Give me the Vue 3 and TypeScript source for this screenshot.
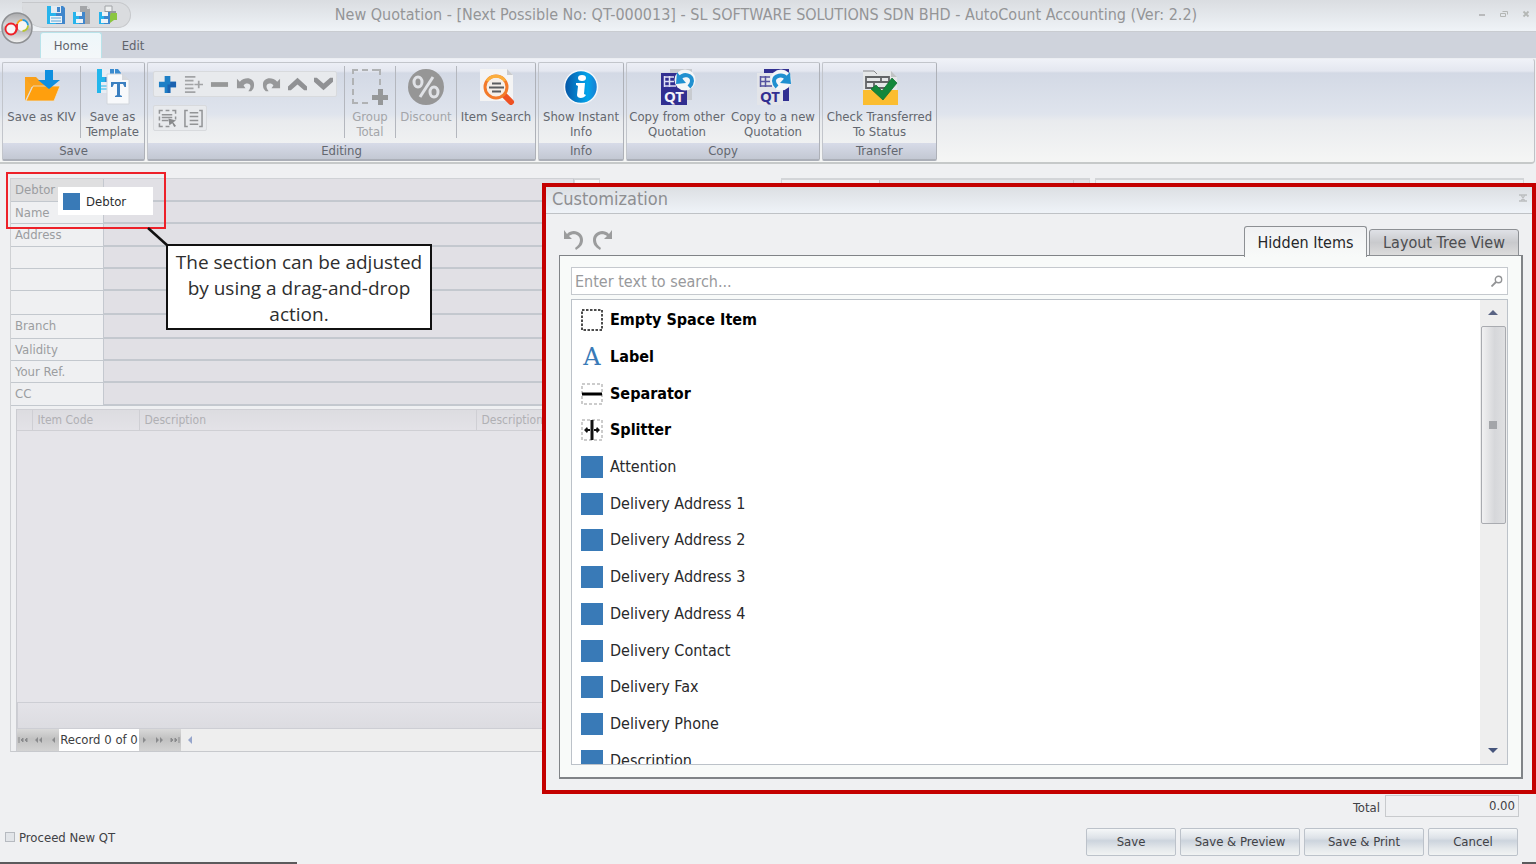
<script setup lang="ts">
import { ref } from 'vue'

interface FieldRow {
  id: string
  label: string
  size: 'short' | 'mid' | 'tall'
}

interface LayoutItem {
  name: string
  kind: 'space' | 'label' | 'separator' | 'splitter' | 'field'
}

const rows: FieldRow[] = [
  { id: 'debtor', label: 'Debtor', size: 'mid' },
  { id: 'name', label: 'Name', size: 'short' },
  { id: 'address1', label: 'Address', size: 'mid' },
  { id: 'address2', label: '', size: 'short' },
  { id: 'address3', label: '', size: 'short' },
  { id: 'address4', label: '', size: 'tall' },
  { id: 'branch', label: 'Branch', size: 'tall' },
  { id: 'validity', label: 'Validity', size: 'short' },
  { id: 'reference', label: 'Your Ref.', size: 'short' },
  { id: 'cc', label: 'CC', size: 'mid' },
]

const items: LayoutItem[] = [
  { name: 'Empty Space Item', kind: 'space' },
  { name: 'Label', kind: 'label' },
  { name: 'Separator', kind: 'separator' },
  { name: 'Splitter', kind: 'splitter' },
  { name: 'Attention', kind: 'field' },
  { name: 'Delivery Address 1', kind: 'field' },
  { name: 'Delivery Address 2', kind: 'field' },
  { name: 'Delivery Address 3', kind: 'field' },
  { name: 'Delivery Address 4', kind: 'field' },
  { name: 'Delivery Contact', kind: 'field' },
  { name: 'Delivery Fax', kind: 'field' },
  { name: 'Delivery Phone', kind: 'field' },
  { name: 'Description', kind: 'field' },
]

const search = ref('')
const total = ref('0.00')
const proceed = ref(false)
</script>

<template>
  <div class="window">
    <header class="titlebar">
      <div class="quick">
        <button type="button" aria-label="Save">
          <svg width="20" height="20" viewBox="0 0 20 20">
            <path d="M1 1h16l2 2v16H1z" fill="#3f86cc" />
            <path d="M1 1h9v18H1z" fill="#27b4ec" />
            <path d="M5 1h10v7H5z" fill="#e3ebf2" />
            <path d="M11 2h3v5h-3z" fill="#3f86cc" />
            <path d="M4 11h12v7H4z" fill="#eef3f7" />
            <path d="M5 13h10M5 16h10" stroke="#59a7da" />
          </svg>
        </button>
        <button type="button" aria-label="Save and new">
          <svg width="20" height="20" viewBox="0 0 20 20">
            <path d="M8 1h7l3 3v15H8z" fill="#a4a6a9" />
            <path d="M15 1v3h3" fill="#d8dadc" />
            <path d="M1 7h12v12H1z" fill="#3f86cc" />
            <path d="M1 7h6v12H1z" fill="#27b4ec" />
            <path d="M4 7h6v4H4zM4 14h7v4H4z" fill="#eef3f7" />
          </svg>
        </button>
        <button type="button" aria-label="Save and print">
          <svg width="20" height="20" viewBox="0 0 20 20">
            <path d="M7 1h7v6H7z" fill="#eef0f1" stroke="#a0a3a6" />
            <path d="M7 6h11v8H7z" fill="#96999c" />
            <path d="M13 8h6v7h-3l-4 3v-7z" fill="#8bc63f" />
            <path d="M1 7h11v12H1z" fill="#3f86cc" />
            <path d="M1 7h5v12H1z" fill="#27b4ec" />
            <path d="M4 7h6v4H4zM3 14h7v4H3z" fill="#eef3f7" />
          </svg>
        </button>
      </div>
      <button type="button" class="orb" aria-label="Application menu">
        <svg width="32" height="32" viewBox="0 0 32 32">
          <defs>
            <linearGradient id="orb-metal" x1="0" y1="0" x2="0" y2="1">
              <stop offset="0" stop-color="#a9aaac" />
              <stop offset=".4" stop-color="#d8d8da" />
              <stop offset=".55" stop-color="#b3b3b6" />
              <stop offset="1" stop-color="#f4f4f4" />
            </linearGradient>
          </defs>
          <circle cx="16" cy="16" r="15" fill="url(#orb-metal)" stroke="#8e9093" stroke-width="1.500" />
          <circle cx="10" cy="17" r="5.500" fill="#f6f6f6" stroke="#ee2027" stroke-width="1.800" />
          <circle cx="21.500" cy="13.500" r="5.500" fill="#f6f6f6" />
          <g fill="none" stroke-width="1.800">
            <path d="M16 13.500a5.500 5.500 0 0 1 5.500-5.500" stroke="#f7a51c" />
            <path d="M21.500 8a5.500 5.500 0 0 1 5.500 5.500" stroke="#249bdc" />
            <path d="M27 13.500a5.500 5.500 0 0 1-5.500 5.500" stroke="#b7c62e" />
            <path d="M16 12v5l-2 4" stroke="#ee2027" />
          </g>
        </svg>
      </button>
      <h1>New Quotation - [Next Possible No: QT-000013] - SL SOFTWARE SOLUTIONS SDN BHD - AutoCount Accounting (Ver: 2.2)</h1>
      <div class="winbtns">
        <button type="button" aria-label="Minimize"><svg width="8" height="8" viewBox="0 0 8 8"><path d="M1 5h6" stroke="#b9babc" stroke-width="2" /></svg></button>
        <button type="button" aria-label="Restore"><svg width="8" height="8" viewBox="0 0 8 8"><path d="M2.500 1.500h5v3M.5 3.500h5v3h-5z" fill="none" stroke="#b4b7b5" /></svg></button>
        <button type="button" aria-label="Close"><svg width="8" height="8" viewBox="0 0 8 8"><path d="M1.500 1.500l5 5M6.500 1.500l-5 5" stroke="#b4b7b5" stroke-width="1.800" /></svg></button>
      </div>
    </header>

    <nav class="tabs">
      <button type="button" class="tab on">Home</button>
      <button type="button" class="tab">Edit</button>
    </nav>

    <div class="ribbon">
      <section class="group g-save">
        <div class="body">
          <button type="button" class="big kiv">
            <svg width="38" height="36" viewBox="0 0 38 36">
              <path d="M2 8h11l3 3h13v7H2z" fill="#f9a01b" />
              <path d="M2 9v23l7-15z" fill="#fba51f" />
              <path d="M10 17h27l-6 15H3z" fill="#ff9f0d" stroke="#e8e3d8" stroke-width=".8" />
              <path d="M22 1h8v10h7L26 20 15 11h7z" fill="#0f8fdf" />
            </svg>
            Save as KIV
          </button>
          <i class="rule"></i>
          <button type="button" class="big grow">
            <svg width="38" height="36" viewBox="0 0 38 36">
              <path d="M3 0h21l3 4v20H3z" fill="#3a8bd0" />
              <path d="M3 0h8v24H3z" fill="#22b6ec" />
              <path d="M8 0h13v8H8zM7 13h8v11H7z" fill="#e7edf4" />
              <path d="M16 0h4v6h-4z" fill="#3a8bd0" />
              <path d="M7 17h6M7 20h6" stroke="#22b6ec" />
              <path d="M13 5h15l7 6v24H13z" fill="#f8f9fb" stroke="#d2d6dc" />
              <path d="M28 5v6h7z" fill="#d5d8dd" />
              <path d="M17 13h15v5h-1.500l-1.500-3h-3v11l2 1v1h-7v-1l2-1V15h-3l-1.500 3H17z" fill="#3b7fc0" />
            </svg>
            Save as<br />Template
          </button>
        </div>
        <h2>Save</h2>
      </section>

      <section class="group g-edit">
        <div class="body">
          <div class="strips">
            <div class="strip">
              <button type="button" aria-label="Add"><svg viewBox="0 0 20 20"><path d="M7 1h6v6h6v6h-6v6H7v-6H1V7h6z" fill="#1d7fc6" /><path d="M13 7h6v6h-6v6h-3V10h3z" fill="#1b62b0" /></svg></button>
              <button type="button" aria-label="Insert"><svg viewBox="0 0 20 20"><path d="M1 2h11M1 6h9M1 10h9M1 14h9M1 18h11M11 10h9M15.500 6v8" stroke="#a2a4a6" stroke-width="1.800" /></svg></button>
              <button type="button" aria-label="Delete"><svg viewBox="0 0 20 20"><path d="M1 7.500h18v5H1z" fill="#979899" /></svg></button>
              <button type="button" aria-label="Undo"><svg viewBox="0 0 20 20"><path d="M1 4l3 3c6-6 15-4 15 3 0 4-1 5-3 7h-3c4-5 2-8-1-8-2 0-3 .5-4 2l2 3H1z" fill="#97989a" /></svg></button>
              <button type="button" aria-label="Redo"><svg viewBox="0 0 20 20"><path d="M19 4l-3 3C10 1 1 3 1 10c0 4 1 5 3 7h3C3 12 5 9 8 9c2 0 3 .5 4 2l-2 3h9z" fill="#97989a" /></svg></button>
              <button type="button" aria-label="Move up"><svg viewBox="0 0 20 20"><path d="M0 12l10-9 10 9v4h-3l-7-6-7 6H0z" fill="#909194" /></svg></button>
              <button type="button" aria-label="Move down"><svg viewBox="0 0 20 20"><path d="M0 7l10 9 10-9V3h-3l-7 6-7-6H0z" fill="#909194" /></svg></button>
            </div>
            <div class="strip">
              <button type="button" aria-label="Select all"><svg viewBox="0 0 20 20"><path d="M1.500 5V1.500H5M8 1.500h4M15 1.500h3.500V5M1.500 8v4M1.500 15v3.500H5M8 18.500h4M18.500 8v3" fill="none" stroke="#929496" stroke-width="1.600" /><path d="M4 6h11M4 9h11M4 12h7" stroke="#929496" stroke-width="1.600" /><path d="M11 10l8 2-3 2 3 4-2 1-2-4-3 2z" fill="#87898b" /></svg></button>
              <button type="button" aria-label="Range"><svg viewBox="0 0 20 20"><path d="M4 1.500H1v17h3M16 1.500h3v17h-3M6 4h9M6 8h9M6 12h9M6 16h9" fill="none" stroke="#929496" stroke-width="1.600" /></svg></button>
            </div>
          </div>
          <i class="rule"></i>
          <button type="button" class="big total off">
            <svg width="38" height="36" viewBox="0 0 38 36">
              <path d="M2 5V1h5M11 1h6M21 1h8v5M29 10v6M2 9v7M2 20v6M2 30v4h5M11 34h6" fill="none" stroke="#b0b2b4" stroke-width="2" />
              <path d="M27 20h5v6h5v5h-5v5h-5v-5h-6v-5h6z" fill="#969899" />
            </svg>
            Group<br />Total
          </button>
          <i class="rule"></i>
          <button type="button" class="big disc off">
            <svg width="38" height="36" viewBox="0 0 38 36">
              <circle cx="19" cy="18" r="18" fill="#969696" />
              <ellipse cx="11" cy="13" rx="4" ry="5" fill="none" stroke="#e0e2e6" stroke-width="3" />
              <ellipse cx="27" cy="23" rx="4" ry="5" fill="none" stroke="#e0e2e6" stroke-width="3" />
              <path d="M26 8L13 28" stroke="#e0e2e6" stroke-width="3" />
            </svg>
            Discount
          </button>
          <i class="rule"></i>
          <button type="button" class="big grow">
            <svg width="38" height="36" viewBox="0 0 38 36">
              <path d="M3 0h27l6 6v26H3z" fill="#f4f4f4" />
              <path d="M30 0v6h6z" fill="#c9cbce" />
              <path d="M27 26l7 7" stroke="#ee5123" stroke-width="6" stroke-linecap="round" />
              <circle cx="19" cy="18" r="11" fill="#f5efe9" stroke="#f37a2a" stroke-width="3" />
              <path d="M10 12a11 11 0 0 1 18 0" fill="none" stroke="#fbae3c" stroke-width="3" />
              <path d="M15 14.500h9M12 18.500h15M15 22.500h9" stroke="#5b5d60" stroke-width="1.800" />
            </svg>
            Item Search
          </button>
        </div>
        <h2>Editing</h2>
      </section>

      <section class="group g-info">
        <div class="body">
          <button type="button" class="big grow">
            <svg width="38" height="36" viewBox="0 0 38 36">
              <defs>
                <linearGradient id="info-blue">
                  <stop offset="0" stop-color="#0655a6" />
                  <stop offset=".7" stop-color="#03a4ea" />
                  <stop offset="1" stop-color="#1c7bd0" />
                </linearGradient>
              </defs>
              <circle cx="19" cy="18" r="16.500" fill="url(#info-blue)" stroke="#f4f7fa" stroke-width="1.500" />
              <ellipse cx="20" cy="9" rx="4" ry="3" fill="#fff" />
              <path d="M14 14h9l-1 11 2 1c-2 4-9 4-9 0l1-9-2-1z" fill="#fff" />
            </svg>
            Show Instant<br />Info
          </button>
        </div>
        <h2>Info</h2>
      </section>

      <section class="group g-copy">
        <div class="body">
          <button type="button" class="big from">
            <svg width="38" height="36" viewBox="0 0 38 36">
              <path d="M12 0h22v31H12z" fill="#c8cbd0" />
              <path d="M3 4h26v32H3z" fill="#312f91" />
              <path d="M6 8h10M6 12.500h10M6 17h12M6.500 7v11M11.500 7v11" stroke="#dfe0f4" stroke-width="1.500" />
              <circle cx="27" cy="11" r="10.500" fill="#f4f6f8" />
              <path d="M18 15l1-12 9 11z" fill="#2090d0" />
              <path d="M22 9c4-5 12-3 12 3 0 2-1 4-3 6" fill="none" stroke="#2090d0" stroke-width="4" />
              <text x="16" y="33" class="qt light">QT</text>
            </svg>
            Copy from other<br />Quotation
          </button>
          <button type="button" class="big grow">
            <svg width="38" height="36" viewBox="0 0 38 36">
              <path d="M10 0h25v32H10z" fill="#312f91" />
              <path d="M3 4h26v32H3z" fill="#e3e5e9" />
              <path d="M6 8h10M6 12.500h10M6 17h12M6.500 7v11M11.500 7v11" stroke="#55539f" stroke-width="1.500" />
              <circle cx="27" cy="11" r="10.500" fill="#f4f6f8" />
              <path d="M37 15L36 3 26 14z" fill="#2090d0" />
              <path d="M32 9c-3-4-12-3-12 3 0 2 1 4 3 6" fill="none" stroke="#2090d0" stroke-width="4" />
              <text x="16" y="33" class="qt dark">QT</text>
            </svg>
            Copy to a new<br />Quotation
          </button>
        </div>
        <h2>Copy</h2>
      </section>

      <section class="group g-transfer">
        <div class="body">
          <button type="button" class="big grow">
            <svg width="38" height="36" viewBox="0 0 38 36">
              <path d="M2 2h28l6 6v18H2z" fill="#e5e7e8" />
              <path d="M2 2h11l3 3" fill="none" stroke="#88898b" />
              <path d="M30 2v6h6z" fill="#c0c2c4" />
              <path d="M2 21h35v15H2z" fill="#fbbd30" />
              <path d="M5 8h23v11H5zM5 13h23M13 13v6M20 8v5" fill="none" stroke="#626466" stroke-width="1.800" />
              <path d="M10 20l5-4 6 6L31 9l5 5-14 17z" fill="#13873b" stroke="#0b6a2c" stroke-width=".7" />
            </svg>
            Check Transferred<br />To Status
          </button>
        </div>
        <h2>Transfer</h2>
      </section>
    </div>

    <main class="document">
      <div class="sheet">
        <div class="heads">
          <form class="entry" @submit.prevent>
            <div v-for="row in rows" :key="row.id" class="row" :class="[row.size, row.id]">
              <label :for="row.id">{{ row.label }}</label>
              <input :id="row.id" type="text" :aria-label="row.label || 'Address line'" />
            </div>
          </form>
          <div class="side lookup"></div>
          <div class="side numbers"><span></span><span class="fill"></span><span class="fill"></span></div>
          <div class="side notes"></div>
        </div>
        <div class="lines">
          <table>
            <thead>
              <tr>
                <th class="c-mark"></th>
                <th class="c-code">Item Code</th>
                <th class="c-desc">Description</th>
                <th>Description</th>
              </tr>
            </thead>
          </table>
          <div class="blank"></div>
          <div class="sums"></div>
          <div class="navigator">
            <div class="navs">
              <button type="button" aria-label="First"><svg width="10" height="8" viewBox="0 0 10 8"><path d="M1 1v6M5 2L3 4l2 2zM9 2L7 4l2 2z" fill="#8a8b8d" stroke="#8a8b8d" /></svg></button>
              <button type="button" aria-label="Previous page"><svg width="10" height="8" viewBox="0 0 10 8"><path d="M5 1L2 4l3 3zM9 1L6 4l3 3z" fill="#8a8b8d" /></svg></button>
              <button type="button" aria-label="Previous"><svg width="10" height="8" viewBox="0 0 10 8"><path d="M7 1L4 4l3 3z" fill="#8a8b8d" /></svg></button>
            </div>
            <output>Record 0 of 0</output>
            <div class="navs">
              <button type="button" aria-label="Next"><svg width="10" height="8" viewBox="0 0 10 8"><path d="M3 1l3 3-3 3z" fill="#8a8b8d" /></svg></button>
              <button type="button" aria-label="Next page"><svg width="10" height="8" viewBox="0 0 10 8"><path d="M1 1l3 3-3 3zM5 1l3 3-3 3z" fill="#8a8b8d" /></svg></button>
              <button type="button" aria-label="Last"><svg width="10" height="8" viewBox="0 0 10 8"><path d="M1 2l2 2-2 2zM5 2l2 2-2 2zM9 1v6" fill="#8a8b8d" stroke="#8a8b8d" /></svg></button>
            </div>
            <button type="button" class="scroll-left" aria-label="Scroll left"><svg width="6" height="8" viewBox="0 0 6 8"><path d="M5 0L1 4l4 4z" fill="#96a5cb" /></svg></button>
          </div>
        </div>
      </div>
    </main>

    <footer>
      <div class="total-row">
        <label for="total">Total</label>
        <input id="total" v-model="total" type="text" />
      </div>
      <div class="actions">
        <label class="proceed"><input v-model="proceed" type="checkbox" />Proceed New QT</label>
        <button type="button">Save</button>
        <button type="button" class="wide">Save &amp; Preview</button>
        <button type="button" class="wide">Save &amp; Print</button>
        <button type="button">Cancel</button>
      </div>
      <div class="edge"><i></i><i></i></div>
    </footer>

    <div class="focus-frame"></div>
    <div class="drag-chip"><i></i>Debtor</div>
    <svg class="pointer" width="24" height="22" viewBox="0 0 24 22"><path d="M2 2l20 18" stroke="#111" stroke-width="2.500" /></svg>
    <p class="callout">The section can be adjusted by using a drag-and-drop action.</p>

    <section class="dialog" aria-label="Customization">
      <header>
        <h2>Customization</h2>
        <button type="button" aria-label="Close"><svg width="8" height="8" viewBox="0 0 8 8"><path d="M0 1h8M0 7h8M2 1l4 6M6 1L2 7" stroke="#bcbec0" stroke-width="1.300" /></svg></button>
      </header>
      <div class="dialog-tools">
        <div class="history">
          <button type="button" aria-label="Undo"><svg width="20" height="20" viewBox="0 0 20 20"><path d="M1 0v9h8L6 6c5-4 11-1 11 4 0 3-2 6-5 8l1 2c5-3 7-6 7-10C20 2 10-2 4 4z" fill="#9b9c9d" /></svg></button>
          <button type="button" aria-label="Redo"><svg width="20" height="20" viewBox="0 0 20 20"><path d="M19 0v9h-8l3-3C9 2 3 5 3 10c0 3 2 6 5 8l-1 2C2 17 0 14 0 10 0 2 10-2 16 4z" fill="#9b9c9d" /></svg></button>
        </div>
        <div class="dialog-tabs" role="tablist">
          <button type="button" role="tab" class="on">Hidden Items</button>
          <button type="button" role="tab">Layout Tree View</button>
        </div>
      </div>
      <div class="pane">
        <div class="search">
          <input v-model="search" type="text" placeholder="Enter text to search..." aria-label="Search" />
          <svg width="12" height="12" viewBox="0 0 12 12"><circle cx="7.500" cy="4.500" r="3.200" fill="none" stroke="#929395" stroke-width="1.400" /><path d="M5 7l-4.500 4.500" stroke="#929395" stroke-width="1.800" /></svg>
        </div>
        <div class="list">
          <ul>
            <li v-for="item in items" :key="item.name" :class="{ builtin: item.kind !== 'field' }">
              <svg width="22" height="22" viewBox="0 0 22 22">
                <rect v-if="item.kind === 'space'" x="1" y="1" width="20" height="20" fill="none" stroke="#111" stroke-width="1.500" stroke-dasharray="2.500 1.500" />
                <text v-else-if="item.kind === 'label'" x="11" y="19" class="glyph">A</text>
                <template v-else-if="item.kind === 'separator'">
                  <rect x="1" y="1" width="20" height="20" fill="none" stroke="#999" stroke-dasharray="3 2" />
                  <path d="M1 11h20" stroke="#000" stroke-width="3" />
                </template>
                <template v-else-if="item.kind === 'splitter'">
                  <rect x="1" y="1" width="20" height="20" fill="none" stroke="#999" stroke-dasharray="3 2" />
                  <path d="M11 1v20" stroke="#111" stroke-width="3" />
                  <path d="M3 11l3-3 1 2h2v2H7l-1 2zM19 11l-3-3-1 2h-2v2h2l1 2z" fill="#111" />
                </template>
                <rect v-else width="22" height="22" fill="#397ab7" />
              </svg>
              {{ item.name }}
            </li>
          </ul>
          <div class="scrollbar">
            <svg width="10" height="6" viewBox="0 0 10 6"><path d="M0 6l5-5 5 5z" fill="#5a6484" /></svg>
            <div class="thumb"><i></i></div>
            <svg class="down" width="10" height="6" viewBox="0 0 10 6"><path d="M0 0l5 5 5-5z" fill="#46557c" /></svg>
          </div>
        </div>
      </div>
    </section>
  </div>
</template>

<style>
body {
  background: #eff0f2;
}
</style>

<style scoped>
.window {
  position: relative;
  display: flex;
  flex-direction: column;
  min-height: 100vh;
  overflow: hidden;
  background: #eff0f2;
  color: #3f4145;
  font: 13px/15px 'DejaVu Sans Condensed', 'DejaVu Sans', 'Noto Sans', sans-serif;
}
.window * {
  box-sizing: border-box;
}
button,
input {
  margin: 0;
  padding: 0;
  border: 0;
  background: none;
  color: inherit;
  font: inherit;
}
h1,
h2,
p,
ul {
  margin: 0;
  padding: 0;
  font-weight: normal;
}
svg {
  display: block;
}

.titlebar {
  position: relative;
  display: flex;
  align-items: center;
  height: 32px;
  border-bottom: 1px solid #c9ccd1;
  background: linear-gradient(#dadde1, #eff3f7);
}
.titlebar h1 {
  flex: 1;
  padding-bottom: 2px;
  color: #949597;
  font-size: 16px;
  line-height: 28px;
  text-align: center;
  white-space: nowrap;
}
.quick {
  display: flex;
  align-items: center;
  gap: 6px;
  width: 109px;
  height: 26px;
  margin: 0 0 2px 22px;
  padding-left: 24px;
  border: 1px solid #c6c8cb;
  border-left: 0;
  border-radius: 0 13px 13px 22px;
  background: #dadcdf;
}
.orb {
  position: absolute;
  left: 1px;
  top: 12px;
  z-index: 2;
}
.winbtns {
  display: flex;
  justify-content: flex-end;
  gap: 14px;
  width: 135px;
  padding: 0 6px 4px 0;
}

.tabs {
  display: flex;
  height: 26px;
  padding-left: 40px;
  background: #cfd3dc;
  color: #5f636b;
}
.tab {
  width: 62px;
}
.tab.on {
  border: 1px solid #b9e3ea;
  border-bottom: 0;
  border-radius: 3px 3px 0 0;
  background: linear-gradient(#eef7fa, #f4f7f9);
}

.ribbon {
  display: flex;
  gap: 2px;
  height: 106px;
  margin-right: 1px;
  padding: 3px 2px;
  border-top: 1px solid #eceef2;
  border-right: 1px solid #bfc2c6;
  border-bottom: 2px solid #c6c9c9;
  border-radius: 0 4px 4px 0;
  background: linear-gradient(#f0f2f8 0, #e4e7f0 12px, #d3d9e5 14px, #dfe4ed 55px, #e9ebee 62px, #f5f6f5 100%);
}
.group {
  display: flex;
  flex: none;
  flex-direction: column;
  height: 99px;
  border: 1px solid #c2c5cb;
  border-right-color: #aeb1b8;
  border-bottom: 2px solid #abafb8;
  border-radius: 2px;
  color: #63676f;
}
.group h2 {
  height: 16px;
  background: linear-gradient(#d7dbe8, #c3c8d3);
  font-size: 13px;
  text-align: center;
}
.group .body {
  display: flex;
  flex: 1;
}
.g-save { width: 143px; }
.g-edit { width: 389px; }
.g-info { width: 86px; }
.g-copy { width: 194px; }
.g-transfer { width: 115px; }
.rule {
  flex: none;
  width: 1px;
  height: 72px;
  margin-top: 3px;
  background: #b4b7be;
}
.big {
  align-self: flex-start;
  padding-top: 6px;
  text-align: center;
  white-space: nowrap;
}
.big svg {
  margin: 0 auto 4px;
}
.grow { flex: 1; }
.kiv { width: 77px; }
.total { width: 50px; }
.disc { width: 60px; }
.from { width: 100px; }
.off { color: #a3a5a9; }
.qt {
  font: bold 15px 'Noto Sans', sans-serif;
  text-anchor: middle;
}
.light { fill: #f3f3fa; }
.dark { fill: #312f91; }
.strips {
  display: flex;
  flex-direction: column;
  align-items: flex-start;
  gap: 8px;
  width: 196px;
  padding: 8px 0 0 5px;
}
.strip {
  display: flex;
  border: 1px solid #d8dadd;
  border-radius: 2px;
  background: #e8eaed;
}
.strip button {
  display: grid;
  place-items: center;
  width: 26px;
  height: 24px;
}
.strip svg {
  width: 19px;
  height: 19px;
}

.document {
  display: flex;
  flex: 1;
  padding: 14px 12px 0 10px;
}
.sheet {
  display: flex;
  flex: 1;
  flex-direction: column;
  border-bottom: 1px solid #c7c9cd;
  border-left: 1px solid #cfd1d4;
}
.heads {
  display: grid;
  grid-template-columns: 563px 26px 181px 309px 5px 1fr;
}
.heads > * {
  grid-row: 1;
}
.entry {
  grid-column: 1;
  border-top: 1px solid #cfd1d5;
}
.row {
  display: flex;
  border-bottom: 1px solid #c3c8ce;
}
.short { height: 22px; }
.mid { height: 23px; }
.tall { height: 24px; }
.row label {
  width: 92px;
  padding: 3px 4px;
  color: #9b9da0;
}
.row.debtor label {
  background: #dfdfe0;
}
.row input {
  flex: 1;
  min-width: 0;
  border: solid #c4c8cf;
  border-width: 0 1px 1px;
  background: #e1e0e5;
}
.side {
  height: 24px;
  border: 1px solid #d3d5d8;
  border-width: 2px 1px 0;
}
.lookup {
  grid-column: 2;
  background: #f5f5f6;
}
.numbers {
  display: grid;
  grid-column: 4;
  grid-template-columns: 97px 1fr 16px;
}
.notes {
  grid-column: 6;
}
.fill {
  border-left: 1px solid #c5c8cd;
  background: #e1e0e5;
}
.lines {
  display: flex;
  flex: 1;
  flex-direction: column;
  margin: 3px 0 0 5px;
  border-left: 1px solid #cbccd1;
}
table {
  width: 100%;
  height: 22px;
  border-collapse: collapse;
  table-layout: fixed;
  background: linear-gradient(#dcdce0, #e3e2e7);
  color: #b0b0b4;
  font-size: 12px;
}
th {
  padding: 0 5px;
  border: 1px solid #cfcfd4;
  border-left: 0;
  font-weight: normal;
  text-align: left;
}
.c-mark { width: 15px; padding: 0; }
.c-code { width: 107px; }
.c-desc { width: 337px; }
.blank {
  flex: 1;
  background: #e5e4e9;
}
.sums {
  height: 27px;
  border: 1px solid #cdced4;
  background: linear-gradient(#e4e3e8, #dcdce1);
}
.navigator {
  display: flex;
  height: 22px;
  background: #eeeeee;
}
.navs {
  display: flex;
  align-items: center;
  justify-content: space-between;
  width: 42px;
  padding: 0 1px;
  background: linear-gradient(#d9d9d9, #c1c1c1 45%, #d3d3d3);
}
.navigator output {
  width: 80px;
  background: #fff;
  color: #3d3d3f;
  line-height: 22px;
  text-align: center;
  white-space: nowrap;
}
.scroll-left {
  width: 20px;
  padding-left: 6px;
}

footer {
  display: flex;
  flex-direction: column;
  height: 112px;
  padding-top: 43px;
}
.total-row {
  display: flex;
  justify-content: flex-end;
  gap: 5px;
  padding-right: 17px;
}
.total-row label {
  padding-top: 5px;
}
.total-row input {
  width: 134px;
  height: 22px;
  padding: 0 3px 2px 0;
  border: 1px solid #c8cacd;
  text-align: right;
}
.actions {
  display: flex;
  gap: 4px;
  padding: 11px 18px 0 5px;
}
.actions button {
  width: 90px;
  height: 28px;
  padding-bottom: 2px;
  border: 1px solid #bcc2ca;
  border-radius: 2px;
  background: linear-gradient(#f5f7f8, #dde2e8 35%, #ccd4dd 45%, #e4e8eb 75%, #f1f3f3);
}
.actions .wide {
  width: 120px;
}
.proceed {
  display: flex;
  align-items: center;
  gap: 4px;
  margin-right: auto;
  padding-bottom: 10px;
}
.proceed input {
  width: 10px;
  height: 10px;
  border: 1px solid #b6bac0;
  background: #e2e5e9;
  appearance: none;
}
.proceed input:checked {
  background: #397ab7;
}
.edge {
  display: flex;
  justify-content: space-between;
  margin-top: auto;
}
.edge i {
  width: 297px;
  height: 2px;
  background: #5b5a5c;
}
.edge i + i {
  width: 14px;
}

.focus-frame {
  position: absolute;
  left: 6px;
  top: 172px;
  width: 160px;
  height: 57px;
  border: 2px solid #ed2129;
}
.drag-chip {
  position: absolute;
  left: 58px;
  top: 187px;
  display: flex;
  align-items: center;
  gap: 6px;
  width: 95px;
  height: 28px;
  padding-left: 5px;
  background: #fff;
  color: #2c2d2f;
}
.drag-chip i {
  width: 17px;
  height: 17px;
  background: #397ab7;
}
.pointer {
  position: absolute;
  left: 146px;
  top: 226px;
}
.callout {
  position: absolute;
  left: 166px;
  top: 244px;
  width: 266px;
  height: 86px;
  padding: 3px 2px;
  border: 2px solid #111;
  background: #fff;
  color: #2e2e2e;
  font: 19px/26px 'Open Sans', 'Noto Sans', sans-serif;
  text-align: center;
}

.dialog {
  position: absolute;
  left: 542px;
  right: 0;
  top: 183px;
  display: flex;
  flex-direction: column;
  height: 611px;
  border: 4px solid #c40000;
  background: #eff0f2;
  font-size: 16px;
}
.dialog header {
  display: flex;
  justify-content: space-between;
  height: 27px;
  padding: 0 5px 0 6px;
  border-bottom: 1px solid #bfc2c6;
  background: linear-gradient(#dcdfe3, #eff3f8);
}
.dialog h2 {
  color: #8e8f92;
  font-size: 18px;
  line-height: 24px;
}
.dialog header button {
  margin-bottom: 5px;
}
.dialog-tools {
  display: flex;
  justify-content: space-between;
  height: 42px;
  padding: 12px 13px 0 17px;
}
.history {
  display: flex;
  gap: 10px;
  padding-top: 4px;
}
.history button {
  height: 20px;
}
.dialog-tabs {
  display: flex;
  align-items: flex-end;
  gap: 2px;
}
.dialog-tabs button {
  position: relative;
  width: 150px;
  height: 27px;
  border: 1px solid #8d9094;
  border-radius: 3px 3px 0 0;
  background: linear-gradient(#dfe1e6, #c9cacd 50%, #dcdcdc);
  color: #4c4d50;
  white-space: nowrap;
}
.dialog-tabs .on {
  z-index: 1;
  width: 123px;
  height: 31px;
  margin-bottom: -1px;
  border-bottom: 0;
  background: linear-gradient(#f0f1f3, #f8faf9);
  color: #26272a;
}
.pane {
  display: flex;
  flex: 1;
  flex-direction: column;
  gap: 4px;
  min-height: 0;
  margin: -1px 9px 11px 13px;
  padding: 11px 13px 12px 11px;
  border: 1px solid #808387;
  border-right-width: 2px;
  border-bottom-width: 2px;
  background: #f8faf9;
}
.search {
  display: flex;
  align-items: center;
  height: 28px;
  padding: 0 4px 0 3px;
  border: 1px solid #c5c9ce;
  background: #fff;
}
.search input {
  flex: 1;
  outline: 0;
}
.search input::placeholder {
  color: #98999c;
  opacity: 1;
}
.list {
  display: flex;
  flex: 1;
  min-height: 0;
  overflow: hidden;
  border: 1px solid #bcc2c9;
  background: #fff;
}
.list ul {
  display: grid;
  flex: 1;
  height: 479px;
  grid-auto-rows: 1fr;
  padding-top: 2px;
  color: #29292b;
  list-style: none;
}
.list li {
  display: flex;
  align-items: center;
  gap: 7px;
  padding-left: 9px;
  line-height: 20px;
}
.list .builtin {
  color: #000;
  font-weight: bold;
}
.glyph {
  fill: #397ab7;
  font: 24px/1 'DejaVu Serif', 'Liberation Serif', serif;
  text-anchor: middle;
}
.scrollbar {
  display: flex;
  flex-direction: column;
  align-items: center;
  width: 27px;
  padding: 9px 1px 10px 0;
  background: #eeeeee;
}
.thumb {
  display: grid;
  place-items: center;
  width: 25px;
  height: 198px;
  margin-top: 11px;
  border: 1px solid #a9abb0;
  border-radius: 2px;
  background: linear-gradient(90deg, #f1f1f2, #d6d7da 55%, #dfe0e2);
}
.thumb i {
  width: 8px;
  height: 8px;
  background: #a3a5a9;
}
.down {
  margin-top: auto;
}
</style>
